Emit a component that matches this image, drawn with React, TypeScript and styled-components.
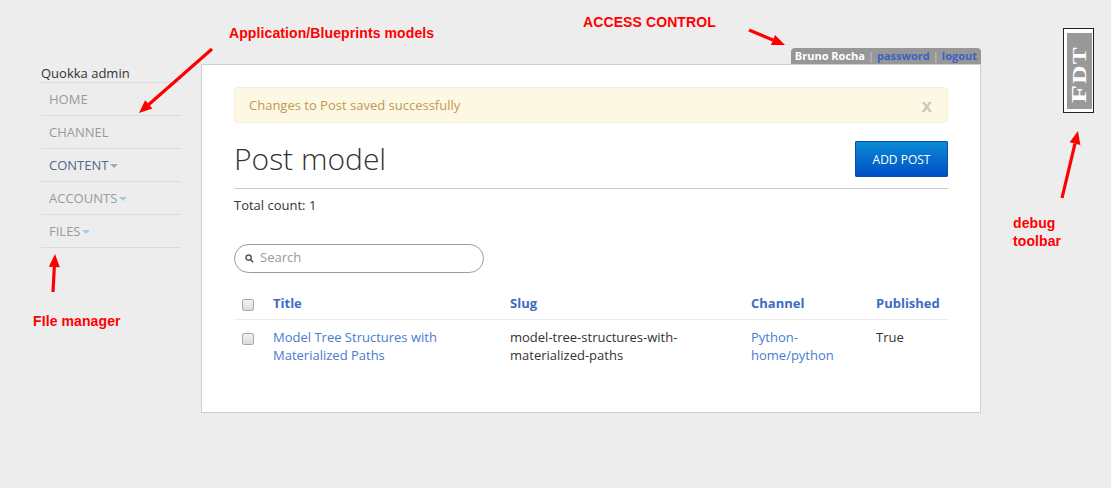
import React from "react";
import styled, { createGlobalStyle } from "styled-components";

const Global = createGlobalStyle`
  html, body { margin: 0; padding: 0; }
  body {
    background: #ededed;
    font-family: "Open Sans", "Noto Sans", sans-serif;
    font-size: 13px;
    color: #333;
    width: 1111px;
    height: 488px;
    overflow: hidden;
  }
`;

const Page = styled.div`
  position: relative;
  width: 1111px;
  height: 488px;
  box-sizing: border-box;
  padding: 48px 0 0 41px;
  display: flex;
  gap: 20px;
  align-items: flex-start;
`;

const Sidebar = styled.nav`
  width: 140px;
  padding-top: 16px;
  display: flex;
  flex-direction: column;
`;

const Brand = styled.div`
  font-size: 13px;
  line-height: 18px;
  color: #333;
  height: 18px;
  border-bottom: 1px solid #dcdcdc;
`;

const NavItem = styled.div<{ $active?: boolean }>`
  height: 32px;
  border-bottom: 1px solid #dcdcdc;
  display: flex;
  align-items: center;
  padding-left: 8px;
  font-size: 13px;
  text-transform: uppercase;
  color: ${(p) => (p.$active ? "#54668c" : "#9a9a9a")};
`;

const Caret = styled.span<{ $color: string }>`
  display: inline-block;
  width: 0;
  height: 0;
  margin-left: 2px;
  margin-top: 1px;
  border-left: 4px solid transparent;
  border-right: 4px solid transparent;
  border-top: 4px solid ${(p) => p.$color};
`;

const Main = styled.div`
  width: 780px;
  display: flex;
  flex-direction: column;
  align-items: flex-end;
`;

const AccessTab = styled.div`
  height: 16px;
  background: #979797;
  border-radius: 4px 4px 0 0;
  padding: 0 4px;
  display: flex;
  align-items: center;
  gap: 3px;
  font-size: 11px;
  font-weight: 700;
  line-height: 16px;
`;

const AccessUser = styled.span`
  color: #fff;
`;
const AccessSep = styled.span`
  color: #c8c8c8;
  font-weight: 400;
`;
const AccessLink = styled.a`
  color: #3b62c2;
  text-decoration: none;
`;

const Card = styled.div`
  width: 780px;
  height: 349px;
  box-sizing: border-box;
  background: #fff;
  border: 1px solid #cfcfcf;
  padding: 22px 32px 0 32px;
  display: flex;
  flex-direction: column;
`;

const Alert = styled.div`
  height: 36px;
  box-sizing: border-box;
  background: #fcf8e3;
  border: 1px solid #f8eed2;
  border-radius: 4px;
  padding: 0 15px 0 14px;
  display: flex;
  align-items: center;
  justify-content: space-between;
  color: #c09853;
  font-size: 13px;
`;

const Close = styled.span`
  color: #c9c9c1;
  font-family: "Liberation Sans", Arial, sans-serif;
  font-weight: 700;
  font-size: 19px;
  line-height: 19px;
`;

const Header = styled.div`
  margin-top: 18px;
  padding-bottom: 11px;
  border-bottom: 1px solid #cccccc;
  display: flex;
  align-items: center;
  justify-content: space-between;
`;

const Title = styled.h1`
  margin: 0;
  font-size: 30px;
  font-weight: 300;
  line-height: 36px;
  color: #333;
`;

const Button = styled.button`
  width: 93px;
  height: 36px;
  border: 1px solid #0a4fb0;
  border-radius: 1px;
  background: linear-gradient(#0a8ad2, #0050c8);
  color: #fff;
  font-family: "Open Sans", sans-serif;
  font-size: 12px;
  text-transform: uppercase;
  padding: 0;
`;

const Count = styled.div`
  margin-top: 7px;
  line-height: 18px;
  font-size: 13px;
`;

const SearchBox = styled.label`
  margin-top: 30px;
  width: 250px;
  height: 29px;
  box-sizing: border-box;
  border: 1px solid #9a9a9a;
  border-radius: 15px;
  display: flex;
  align-items: center;
  padding-left: 10px;
  gap: 6px;
  color: #999;
  font-size: 13px;
`;

const SearchInput = styled.input`
  border: none;
  outline: none;
  background: transparent;
  font-family: "Open Sans", sans-serif;
  font-size: 13px;
  color: #333;
  padding: 0;
  margin-top: -3px;
  width: 200px;
  &::placeholder { color: #999; }
`;

const Table = styled.table`
  margin-top: 15px;
  width: 714px;
  border-collapse: collapse;
  table-layout: fixed;
`;

const Th = styled.th<{ $w: number }>`
  box-sizing: border-box;
  width: ${(p) => p.$w}px;
  text-align: left;
  padding: 6px 8px 7px 8px;
  line-height: 18px;
  font-size: 13px;
  font-weight: 700;
  color: #3d6cc2;
  border-bottom: 1px solid #ececec;
  vertical-align: middle;
`;

const Td = styled.td`
  padding: 8px 8px;
  line-height: 18px;
  font-size: 13px;
  vertical-align: top;
  color: #333;
`;

const Link = styled.a`
  color: #4a7bcf;
  text-decoration: none;
`;

const Check = styled.span`
  display: inline-block;
  width: 12px;
  height: 12px;
  box-sizing: border-box;
  border: 1px solid #a8a8a8;
  border-radius: 2px;
  background: linear-gradient(#f4f4f4, #dcdcdc);
  vertical-align: middle;
  margin-top: 1px;
`;

const Overlay = styled.svg`
  position: absolute;
  left: 0;
  top: 0;
  pointer-events: none;
`;

const Note = styled.div<{ $x: number; $y: number }>`
  position: absolute;
  left: ${(p) => p.$x}px;
  top: ${(p) => p.$y}px;
  color: #ff0000;
  font-family: "Liberation Sans", Arial, sans-serif;
  font-weight: 700;
  font-size: 14px;
  letter-spacing: 0.1px;
  line-height: 18px;
  white-space: nowrap;
`;

const Fdt = styled.div`
  position: absolute;
  left: 1063px;
  top: 28px;
  width: 31px;
  height: 85px;
  box-sizing: border-box;
  border: 1px solid #222;
  background: #fff;
  padding: 4px 1px 3px 3px;
  display: flex;
`;

const FdtInner = styled.div`
  flex: 1;
  min-width: 0;
  background: #999;
  display: flex;
  align-items: center;
  justify-content: center;
`;

const FdtText = styled.div`
  flex: none;
  transform: translate(0px, 3px) rotate(-90deg) scaleX(1.4);
  color: #fff;
  font-family: "Liberation Serif", "DejaVu Serif", serif;
  font-weight: 700;
  font-size: 18px;
  line-height: 18px;
  letter-spacing: 1px;
  white-space: nowrap;
`;

const BigF = styled.span`
  font-size: 21px;
`;

const Arrow: React.FC<{ x1: number; y1: number; x2: number; y2: number }> = ({ x1, y1, x2, y2 }) => {
  const dx = x2 - x1;
  const dy = y2 - y1;
  const len = Math.sqrt(dx * dx + dy * dy);
  const ux = dx / len;
  const uy = dy / len;
  const hl = 13;
  const hw = 5.5;
  const bx = x2 - ux * hl;
  const by = y2 - uy * hl;
  const px = -uy;
  const py = ux;
  return (
    <g>
      <line x1={x1} y1={y1} x2={bx} y2={by} stroke="#ff0000" strokeWidth={3.2} />
      <polygon
        points={`${x2},${y2} ${bx + px * hw},${by + py * hw} ${bx - px * hw},${by - py * hw}`}
        fill="#ff0000"
      />
    </g>
  );
};

export default function App() {
  return (
    <>
      <Global />
      <Page>
        <Sidebar>
          <Brand>Quokka admin</Brand>
          <NavItem>Home</NavItem>
          <NavItem>Channel</NavItem>
          <NavItem $active>
            Content<Caret $color="#a8a8a8" />
          </NavItem>
          <NavItem>
            Accounts<Caret $color="#9fd0ea" />
          </NavItem>
          <NavItem>
            Files<Caret $color="#9fd0ea" />
          </NavItem>
        </Sidebar>
        <Main>
          <AccessTab>
            <AccessUser>Bruno Rocha</AccessUser>
            <AccessSep>|</AccessSep>
            <AccessLink>password</AccessLink>
            <AccessSep>|</AccessSep>
            <AccessLink>logout</AccessLink>
          </AccessTab>
          <Card>
            <Alert>
              <span>Changes to Post saved successfully</span>
              <Close>x</Close>
            </Alert>
            <Header>
              <Title>Post model</Title>
              <Button>Add Post</Button>
            </Header>
            <Count>Total count: 1</Count>
            <SearchBox>
              <svg width="9" height="9" viewBox="0 0 10 10">
                <circle cx="4" cy="4" r="2.9" fill="none" stroke="#555" strokeWidth="1.6" />
                <line x1="6.1" y1="6.1" x2="9" y2="9" stroke="#555" strokeWidth="1.9" />
              </svg>
              <SearchInput placeholder="Search" />
            </SearchBox>
            <Table>
              <thead>
                <tr>
                  <Th $w={31}>
                    <Check />
                  </Th>
                  <Th $w={237}>Title</Th>
                  <Th $w={241}>Slug</Th>
                  <Th $w={125}>Channel</Th>
                  <Th $w={80}>Published</Th>
                </tr>
              </thead>
              <tbody>
                <tr>
                  <Td>
                    <Check />
                  </Td>
                  <Td>
                    <Link>Model Tree Structures with Materialized Paths</Link>
                  </Td>
                  <Td>model-tree-structures-with-materialized-paths</Td>
                  <Td>
                    <Link>Python-home/python</Link>
                  </Td>
                  <Td>True</Td>
                </tr>
              </tbody>
            </Table>
          </Card>
        </Main>

        <Note $x={229} $y={24}>Application/Blueprints models</Note>
        <Note $x={583} $y={13}>ACCESS CONTROL</Note>
        <Note $x={33} $y={312}>FIle manager</Note>
        <Note $x={1013} $y={214}>debug</Note>
        <Note $x={1013} $y={232}>toolbar</Note>

        <Overlay width={1111} height={488}>
          <Arrow x1={212} y1={49} x2={139} y2={113} />
          <Arrow x1={749} y1={30} x2={785} y2={45} />
          <Arrow x1={53} y1={292} x2={55} y2={254} />
          <Arrow x1={1062} y1={198} x2={1078} y2={131} />
        </Overlay>

        <Fdt>
          <FdtInner>
            <FdtText>
              <BigF>F</BigF>DT
            </FdtText>
          </FdtInner>
        </Fdt>
      </Page>
    </>
  );
}
